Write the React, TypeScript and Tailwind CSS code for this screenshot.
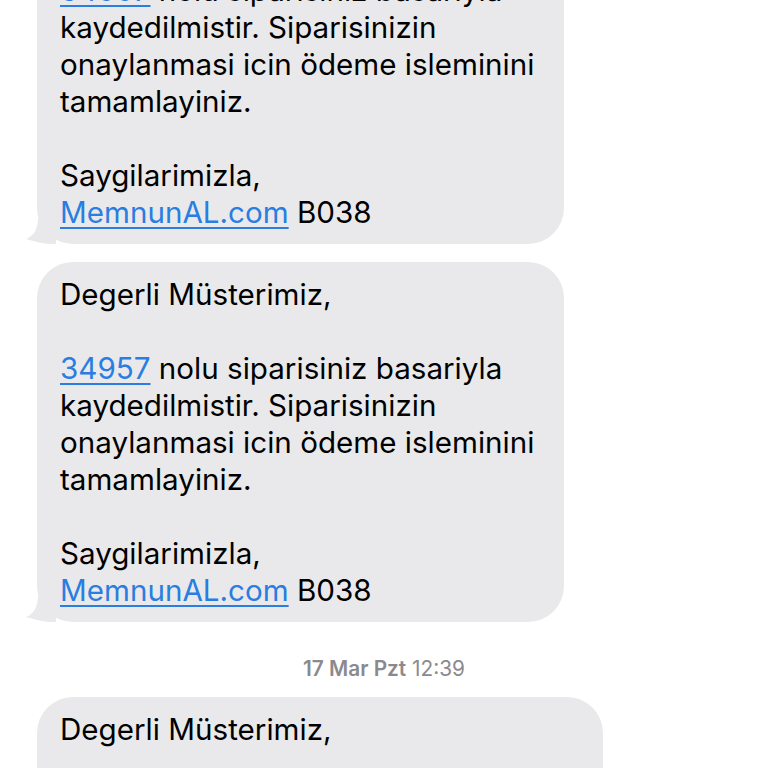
import React from "react";

function Tail() {
  return (
    <svg
      className="absolute left-[-11px] bottom-0"
      width="30"
      height="26"
      viewBox="0 0 30 26"
    >
      <path d="M30 0 L30 26 L27 26 C19 26 10 24 0 21 C8 18 12 10 12 0 Z" fill="#e9e9eb" />
    </svg>
  );
}

function Link({ children }: { children: React.ReactNode }) {
  return (
    <span className="text-[#2a7de1] underline decoration-[1.5px] underline-offset-[4px]">{children}</span>
  );
}

function Bubble({ width, tail, children }: { width: string; tail?: boolean; children: React.ReactNode }) {
  return (
    <div className={`relative ${width} bg-[#e9e9eb] rounded-[36px] px-[23px] pt-[14px] pb-[13px]`}>
      {tail && <Tail />}
      <div className="relative text-[29.6px] leading-[37px] text-black whitespace-nowrap">{children}</div>
    </div>
  );
}

function OrderMessage({ number }: { number: string }) {
  return (
    <>
      <div>Degerli Müsterimiz,</div>
      <div>&nbsp;</div>
      <div>
        <Link>{number}</Link> nolu siparisiniz basariyla
      </div>
      <div>kaydedilmistir. Siparisinizin</div>
      <div>onaylanmasi icin ödeme isleminini</div>
      <div>tamamlayiniz.</div>
      <div>&nbsp;</div>
      <div>Saygilarimizla,</div>
      <div>
        <Link>MemnunAL.com</Link> B038
      </div>
    </>
  );
}

export default function App() {
  return (
    <div
      className="w-[768px] h-[768px] overflow-hidden bg-white"
      style={{ fontFamily: "Inter, 'Noto Sans', sans-serif" }}
    >
      <div className="flex flex-col -mt-[116px] pl-[37px]">
        <Bubble width="w-[527px]" tail>
          <OrderMessage number="34957" />
        </Bubble>
        <div className="h-[18px]" />
        <Bubble width="w-[527px]" tail>
          <OrderMessage number="34957" />
        </Bubble>
        <div className="pl-[266px] pt-[35px] pb-[16px] text-[20.8px] leading-[24px] text-[#8a8a8e]">
          <span className="font-semibold">17 Mar Pzt</span> 12:39
        </div>
        <Bubble width="w-[566px]">
          <div>Degerli Müsterimiz,</div>
          <div>&nbsp;</div>
          <div>
            <Link>34958</Link> nolu siparisiniz basariyla
          </div>
        </Bubble>
      </div>
    </div>
  );
}
